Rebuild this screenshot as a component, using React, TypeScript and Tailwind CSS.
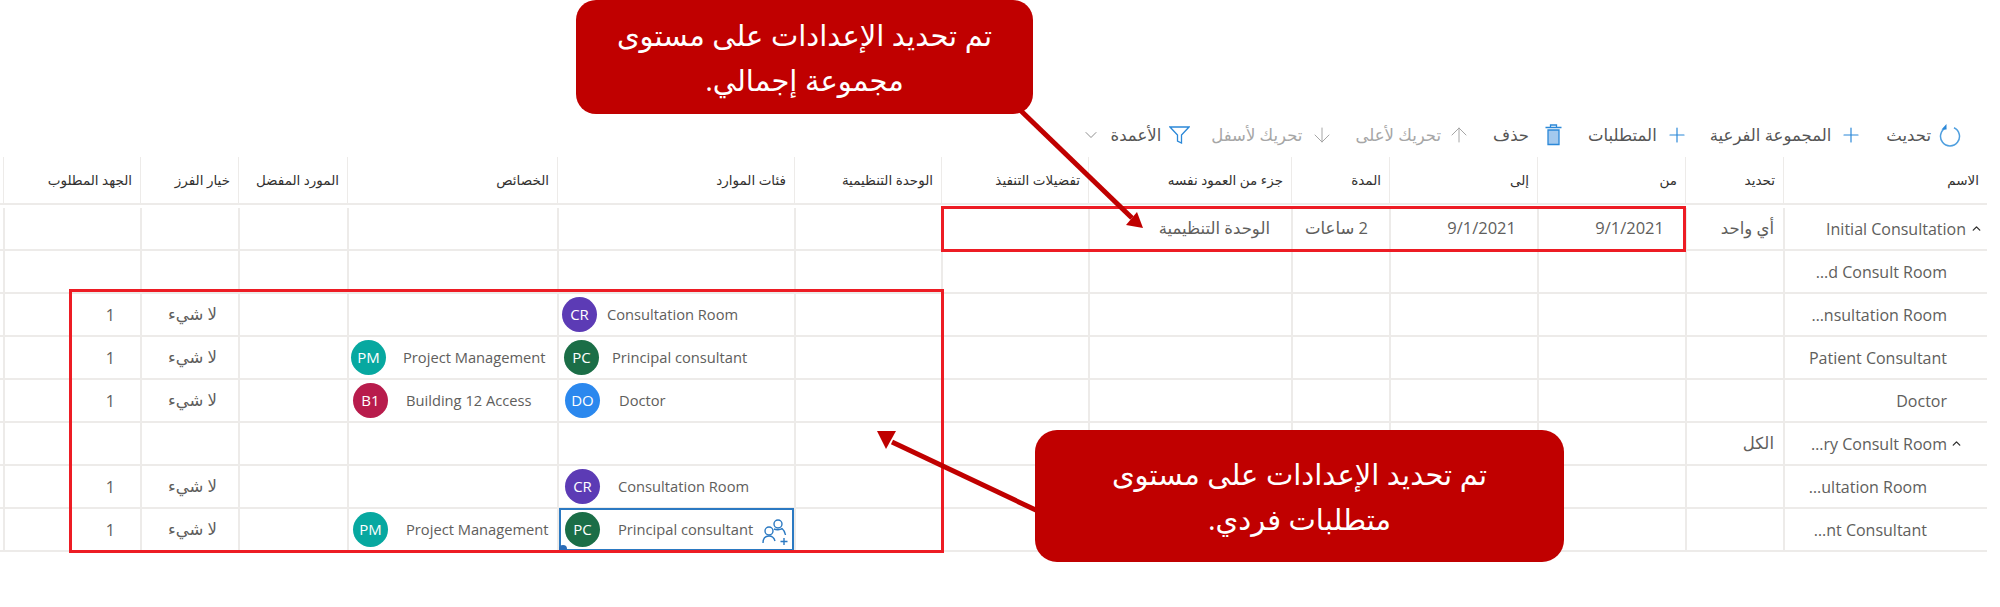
import { ArrowDown, ArrowUp, ChevronDown, ChevronUp, Plus } from "lucide-react";
import type { ReactNode } from "react";

const gridCols = "grid grid-cols-[204px_98px_148px_148px_98px_203px_147px_147px_237px_210px_109px_98px_137px]";
const uiFont = "font-['Open_Sans','DejaVu_Sans',sans-serif]";

const headers = [
  "الاسم",
  "تحديد",
  "من",
  "إلى",
  "المدة",
  "جزء من العمود نفسه",
  "تفضيلات التنفيذ",
  "الوحدة التنظيمية",
  "فئات الموارد",
  "الخصائص",
  "المورد المفضل",
  "خيار الفرز",
  "الجهد المطلوب",
];

type Chip = { initials: string; color: string; label: string; gap: string };

type Row = {
  name: string;
  pad: string;
  open?: boolean;
  pick?: string;
  from?: string;
  to?: string;
  span?: string;
  part?: string;
  skill?: Chip;
  trait?: Chip;
  effort?: boolean;
  selected?: boolean;
};

const rows: Row[] = [
  { name: "Initial Consultation", pad: "pr-[21px]", open: true, pick: "أي واحد", from: "9/1/2021", to: "9/1/2021", span: "2 ساعات", part: "الوحدة التنظيمية" },
  { name: "…d Consult Room", pad: "pr-[40px]" },
  { name: "…nsultation Room", pad: "pr-[40px]", effort: true, skill: { initials: "CR", color: "bg-[#5c3bb5]", label: "Consultation Room", gap: "ml-[3px] gap-[10px]" } },
  {
    name: "Patient Consultant",
    pad: "pr-[40px]",
    effort: true,
    skill: { initials: "PC", color: "bg-[#1b6e47]", label: "Principal consultant", gap: "ml-[5px] gap-[13px]" },
    trait: { initials: "PM", color: "bg-[#07a8a0]", label: "Project Management", gap: "ml-[2px] gap-[17px]" },
  },
  {
    name: "Doctor",
    pad: "pr-[40px]",
    effort: true,
    skill: { initials: "DO", color: "bg-[#2b88ee]", label: "Doctor", gap: "ml-[6px] gap-[19px]" },
    trait: { initials: "B1", color: "bg-[#b81c4c]", label: "Building 12 Access", gap: "ml-[4px] gap-[18px]" },
  },
  { name: "…ry Consult Room", pad: "pr-[40px]", open: true, pick: "الكل" },
  { name: "…ultation Room", pad: "pr-[60px]", effort: true, skill: { initials: "CR", color: "bg-[#5c3bb5]", label: "Consultation Room", gap: "ml-[6px] gap-[18px]" } },
  {
    name: "…nt Consultant",
    pad: "pr-[60px]",
    effort: true,
    selected: true,
    skill: { initials: "PC", color: "bg-[#1b6e47]", label: "Principal consultant", gap: "ml-[6px] gap-[18px]" },
    trait: { initials: "PM", color: "bg-[#07a8a0]", label: "Project Management", gap: "ml-[4px] gap-[18px]" },
  },
];

function Cell({ children, className = "" }: { children?: ReactNode; className?: string }) {
  return <div className={`flex h-full min-w-0 items-center border-l-2 border-[#edebe9] ${className}`}>{children}</div>;
}

function ChipView({ chip }: { chip: Chip }) {
  return (
    <div dir="ltr" className={`flex items-center ${chip.gap}`}>
      <div className={`flex h-[35px] w-[35px] shrink-0 items-center justify-center rounded-full text-[15px] text-white ${chip.color}`}>
        {chip.initials}
      </div>
      <span className="whitespace-nowrap text-[14.7px] text-[#605e5c]">{chip.label}</span>
    </div>
  );
}

function RefreshIcon() {
  return (
    <svg width="22" height="24" viewBox="0 0 22 24" fill="none" stroke="#4f9fdf" strokeWidth="1.5">
      <path d="M7 4.800A9.500 9.500 0 1 0 15 4.800" />
      <path d="M7.500 1V6.500H2.500L7.500 1Z" fill="#2b88d8" stroke="none" />
    </svg>
  );
}

function TrashIcon() {
  return (
    <svg width="17" height="22" viewBox="0 0 17 22" fill="none" stroke="#2b88d8" strokeWidth="1.3">
      <path d="M3 6H14V20.500H3Z" fill="#a3c9ee" />
      <path d="M0.500 3.500H16.500M5.500 3.500V1H11.500V3.500" />
    </svg>
  );
}

function FunnelIcon() {
  return (
    <svg width="21" height="18" viewBox="0 0 21 18" fill="none" stroke="#2b88d8" strokeWidth="1.3">
      <path d="M1 1H20L12.500 9V17L8.500 15V9Z" />
    </svg>
  );
}

function PeopleAddIcon() {
  return (
    <svg width="27" height="28" viewBox="0 0 27 28" fill="none" stroke="#2b79c2" strokeWidth="1.4">
      <circle cx="16" cy="6" r="4" />
      <circle cx="7" cy="13" r="4" />
      <path d="M1 25C1 20 4 18 7 18C10 18 12 19.500 13 23" />
      <path d="M12 11C14 12 18 12 20 10.500C22 12 23 14 23.500 17" />
      <path d="M22 20V27M18.500 23.500H25.500" />
    </svg>
  );
}

function ToolButton({ icon, label, muted = false, className = "" }: { icon: ReactNode; label: string; muted?: boolean; className?: string }) {
  return (
    <div className={`flex items-center ${className}`}>
      {icon}
      <span className={`whitespace-nowrap text-[16.5px] ${muted ? "text-[#a6a6a6]" : "text-[#555]"}`}>{label}</span>
    </div>
  );
}

function Toolbar() {
  return (
    <div className="mt-[115px] flex h-10 items-center pr-[26px]">
      <ToolButton icon={<RefreshIcon />} label="تحديث" className="gap-[8px]" />
      <ToolButton icon={<Plus size={24} strokeWidth={1.2} color="#2b88d8" />} label="المجموعة الفرعية" className="mr-[23px] gap-2" />
      <ToolButton icon={<Plus size={24} strokeWidth={1.2} color="#2b88d8" />} label="المتطلبات" className="mr-[21px] gap-2" />
      <ToolButton icon={<TrashIcon />} label="حذف" className="mr-[26px] gap-4" />
      <ToolButton icon={<ArrowUp size={24} strokeWidth={1} color="#a6a6a6" />} label="تحريك لأعلى" muted className="mr-[22px] gap-[6px]" />
      <ToolButton icon={<ArrowDown size={24} strokeWidth={1} color="#a6a6a6" />} label="تحريك لأسفل" muted className="mr-[21px] gap-2" />
      <ToolButton icon={<FunnelIcon />} label="الأعمدة" className="mr-[21px] gap-2" />
      <ChevronDown size={20} strokeWidth={1} color="#777" className="mr-[10px]" />
    </div>
  );
}

function DataRow({ row }: { row: Row }) {
  const textCell = "pr-[21px] text-[16.5px] text-[#605e5c]";
  const isFirst = row.name.startsWith("Initial");
  return (
    <div className={`${gridCols} h-[43px] border-b-2 border-[#edebe9]`}>
      <Cell className={`relative ${row.pad} text-[16px] text-[#605e5c]`}>
        {row.open && (
          <ChevronUp size={13} strokeWidth={2.5} color="#323130" className={`absolute top-[14px] ${isFirst ? "right-[4px]" : "right-[24px]"}`} />
        )}
        <span dir="ltr" className="whitespace-nowrap">{row.name}</span>
      </Cell>
      <Cell className="pr-[9px] text-[16.5px] text-[#605e5c]">{row.pick}</Cell>
      <Cell className={textCell}>{row.from}</Cell>
      <Cell className={textCell}>{row.to}</Cell>
      <Cell className={textCell}>{row.span}</Cell>
      <Cell className={textCell}>{row.part}</Cell>
      <Cell />
      <Cell />
      <Cell className="relative justify-end">
        {row.skill && <ChipView chip={row.skill} />}
        {row.selected && (
          <div className="absolute inset-x-0 -top-[1px] -bottom-[1px] border-2 border-[#2b79c2]">
            <div className="absolute right-[3px] top-[8px]">
              <PeopleAddIcon />
            </div>
            <div className="absolute -bottom-[4px] -left-[2px] h-2 w-2 rounded-full bg-[#2b6cb8]" />
          </div>
        )}
      </Cell>
      <Cell className="justify-end">{row.trait && <ChipView chip={row.trait} />}</Cell>
      <Cell />
      <Cell className="pr-[21px] text-[16.5px] text-[#605e5c]">{row.effort && "لا شيء"}</Cell>
      <Cell className="pr-[25px] text-[16px] text-[#605e5c]">{row.effort && "1"}</Cell>
    </div>
  );
}

function Callout({ className, lines }: { className: string; lines: string[] }) {
  return (
    <div className={`absolute flex flex-col items-center justify-center bg-[#c00000] text-center text-[29px] leading-[45px] text-white ${className}`}>
      {lines.map((line) => (
        <div key={line}>{line}</div>
      ))}
    </div>
  );
}

export default function App() {
  return (
    <div dir="rtl" className={`relative h-[607px] w-[2000px] overflow-hidden bg-white pr-[13px] ${uiFont}`}>
      <Toolbar />

      {/* table */}
      <div className="mt-[2px]">
        <div className={`${gridCols} h-[48px] border-b-2 border-[#edebe9]`}>
          {headers.map((title) => (
            <div key={title} className="flex items-center border-l border-[#edebe9] pr-2 text-[13.5px] text-[#323130]">
              {title}
            </div>
          ))}
        </div>
        <div className="mt-[3px]">
          {rows.map((row) => (
            <DataRow key={row.name} row={row} />
          ))}
        </div>
      </div>

      {/* red highlight boxes */}
      <div className="absolute left-[941px] top-[206px] h-[46px] w-[745px] border-[3px] border-[#ed1c24]" />
      <div className="absolute left-[69px] top-[289px] h-[264px] w-[875px] border-[3px] border-[#ed1c24]" />

      {/* arrows */}
      <svg className="absolute left-0 top-0" width="2000" height="607" fill="none">
        <path d="M1017 107L1132 218" stroke="#c00000" strokeWidth="5" />
        <path d="M1143 228L1126 225L1137 212Z" fill="#c00000" />
        <path d="M1040 512L892 442" stroke="#c00000" strokeWidth="5" />
        <path d="M877 431L896 431L886 449Z" fill="#c00000" />
      </svg>

      <Callout
        className="left-[576px] top-0 h-[114px] w-[457px] rounded-[20px]"
        lines={["تم تحديد الإعدادات على مستوى", "مجموعة إجمالي."]}
      />
      <Callout
        className="left-[1035px] top-[430px] h-[132px] w-[529px] rounded-[22px]"
        lines={["تم تحديد الإعدادات على مستوى", "متطلبات فردي."]}
      />
    </div>
  );
}
